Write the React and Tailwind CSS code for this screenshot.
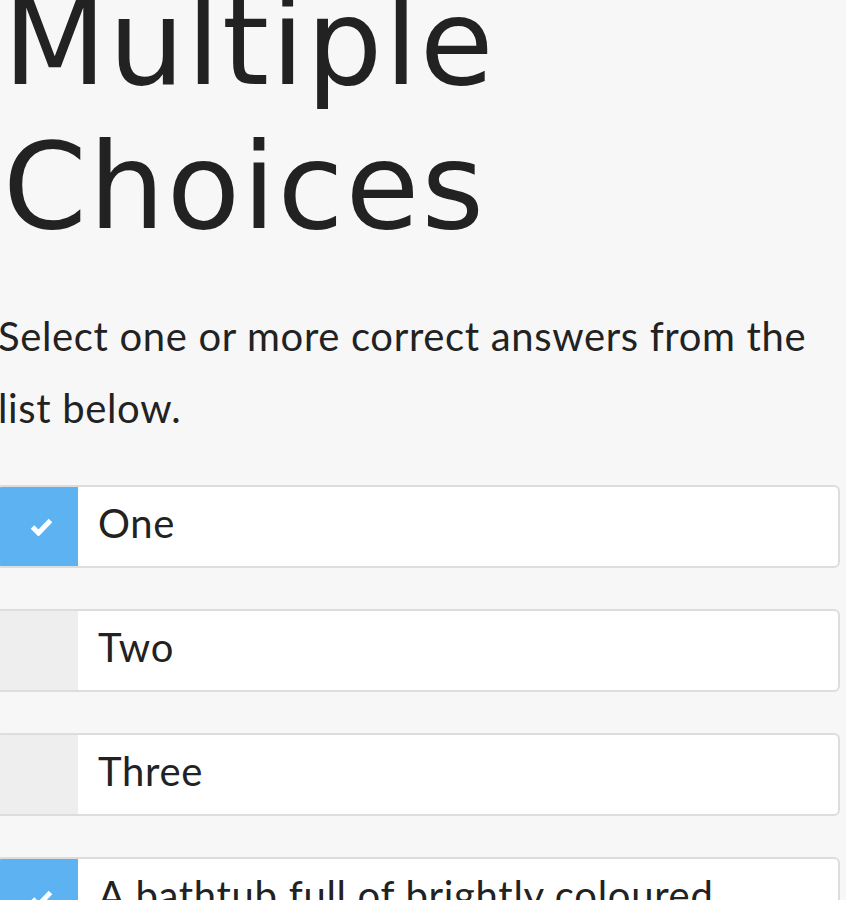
import React, { useState } from "react";

const initialOptions = [
  { id: 1, label: "One", checked: true },
  { id: 2, label: "Two", checked: false },
  { id: 3, label: "Three", checked: false },
  { id: 4, label: "A bathtub full of brightly coloured balls", checked: true },
];

function CheckIcon() {
  return (
    <svg width="23" height="19" viewBox="0 0 23 19" fill="none">
      <path d="M2.5 10 L8.5 16 L20.5 3.5" stroke="white" strokeWidth="5" strokeLinejoin="miter" />
    </svg>
  );
}

function Option({ option, onToggle }) {
  return (
    <button
      type="button"
      onClick={() => onToggle(option.id)}
      className="flex w-full min-h-[83px] mb-[41px] bg-white border-2 border-[#dddddd] rounded-md overflow-hidden text-left"
    >
      <span
        className={
          option.checked
            ? "w-[80px] shrink-0 flex justify-center pl-[6px] pt-[30px] bg-[#5db3f2]"
            : "w-[80px] shrink-0 flex justify-center pl-[6px] pt-[30px] bg-[#eeeeee]"
        }
      >
        {option.checked && <CheckIcon />}
      </span>
      <span className="pl-[20px] pr-[40px] pt-[10px] pb-[17px] text-[40px] leading-[52px] tracking-[0.7px] text-[#222222]">
        {option.label}
      </span>
    </button>
  );
}

export default function App() {
  const [options, setOptions] = useState(initialOptions);

  const toggle = (id) =>
    setOptions((prev) =>
      prev.map((o) => (o.id === id ? { ...o, checked: !o.checked } : o))
    );

  return (
    <div className="min-h-screen bg-[#f7f7f7] overflow-hidden font-['Lato',sans-serif]">
      <div className="ml-[-4px] w-[844px] mt-[-29px]">
        <h1 className="pl-[7px] font-['DejaVu_Sans',sans-serif] text-[120px] leading-[144px] font-normal text-[#222222] tracking-[2px]">
          Multiple Choices
        </h1>
        <p className="mt-[41px] pl-[2px] text-[40px] leading-[72px] tracking-[0.65px] text-[#222222]">
          Select one or more correct answers from the list below.
        </p>
        <div className="mt-[41px]">
          {options.map((o) => (
            <Option key={o.id} option={o} onToggle={toggle} />
          ))}
        </div>
      </div>
    </div>
  );
}
